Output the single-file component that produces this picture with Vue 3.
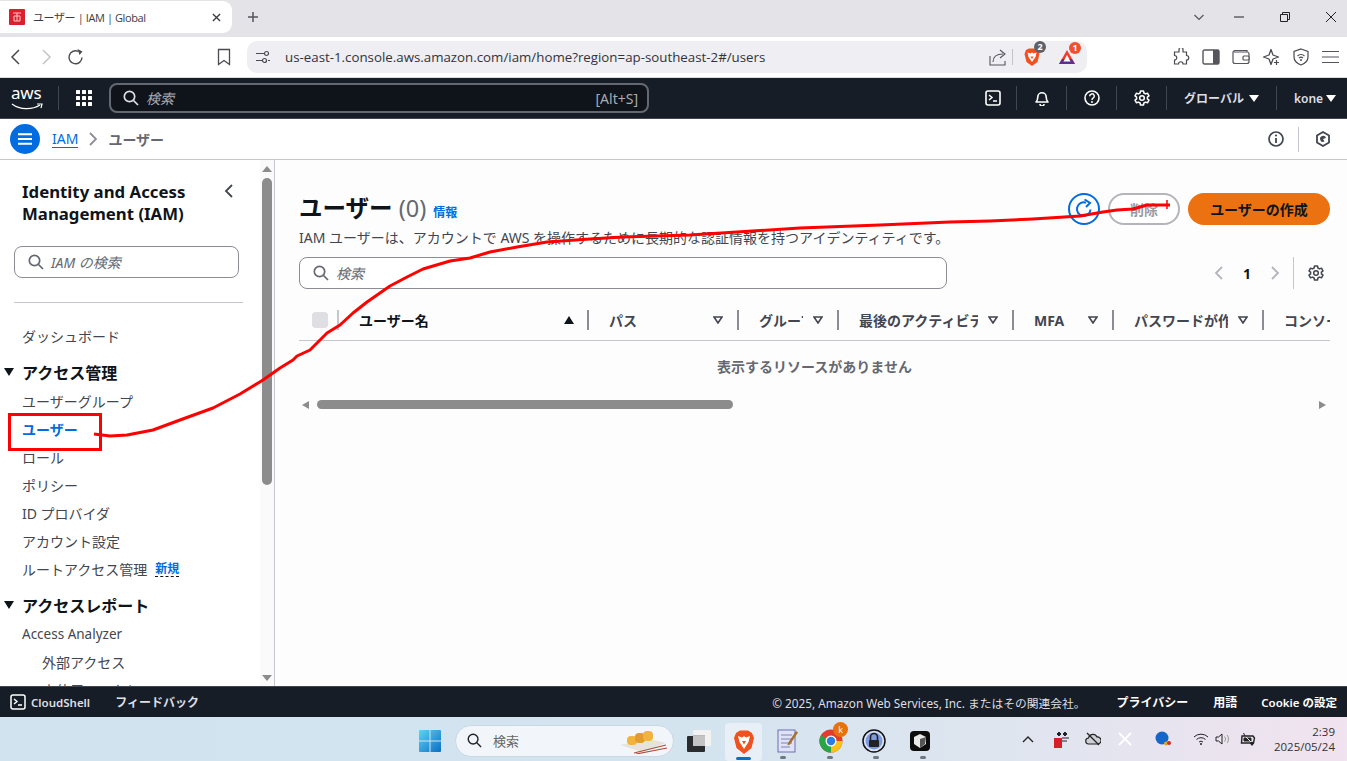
<script setup>
const sideTop = ['ユーザーグループ']
const columns = [
  { label: 'ユーザー名', width: 250, sort: true, strong: true },
  { label: 'パス', width: 150 },
  { label: 'グループ', width: 100 },
  { label: '最後のアクティビティ', width: 175 },
  { label: 'MFA', width: 100 },
  { label: 'パスワードが作成された日時', width: 150 },
  { label: 'コンソールへの最終サインイン', width: 200, last: true }
]
const redLine = '94,434 110,436 127,435 153,430 180,420 213,408 240,394 263,380 280,368 293,360 297,356 310,350 327,333 340,325 353,313 367,302 390,286 407,277 423,269 450,261 470,258 490,252 517,247 547,242 590,239 623,237 690,235 800,228 880,225 950,222 990,221 1033,219 1080,216 1103,212 1117,210 1133,209 1147,205 1170,205'
const trayDots = [0, 1, 2, 3]
</script>

<template>
  <div class="screen">
    <!-- browser tab strip -->
    <div class="tabstrip">
      <div class="tab">
        <svg class="favicon" viewBox="0 0 16 16"><rect width="16" height="16" rx="1" fill="#d9202c"/><path d="M4 4h8M5 7h6v5H5zM8 4v8" fill="none" stroke="#f8c9c9" stroke-width="1"/></svg>
        <span class="tabtitle">ユーザー | IAM | Global</span>
        <svg class="tabclose" viewBox="0 0 10 10"><path d="M1 1l8 8M9 1l-8 8" stroke="#3c3c43" stroke-width="1.5"/></svg>
      </div>
      <svg class="newtab" viewBox="0 0 12 12"><path d="M6 1v10M1 6h10" stroke="#55555c" stroke-width="1.5"/></svg>
      <div class="winctl">
        <svg viewBox="0 0 12 12" class="wc-chev"><path d="M1.500 4l4.500 4.500L10.500 4" fill="none" stroke="#55555c" stroke-width="1.200"/></svg>
        <svg viewBox="0 0 12 12" class="wc-btn"><path d="M1 6h10" stroke="#222" stroke-width="1"/></svg>
        <svg viewBox="0 0 12 12" class="wc-btn"><path d="M1.500 3.500h7v7h-7zM3.500 3.500v-2h7v7h-2" fill="none" stroke="#222" stroke-width="1"/></svg>
        <svg viewBox="0 0 12 12" class="wc-btn"><path d="M1 1l10 10M11 1L1 11" stroke="#222" stroke-width="1"/></svg>
      </div>
    </div>

    <!-- browser toolbar -->
    <div class="toolbar">
      <div class="tb-left">
        <span class="tb-btn"><svg viewBox="0 0 16 18" width="16" height="18"><path d="M11 2L4 9l7 7" fill="none" stroke="#4a4a50" stroke-width="1.500"/></svg></span>
        <span class="tb-btn"><svg viewBox="0 0 16 18" width="16" height="18"><path d="M5 2l7 7-7 7" fill="none" stroke="#c4c4c9" stroke-width="1.500"/></svg></span>
        <span class="tb-btn"><svg viewBox="0 0 18 18" width="18" height="18"><path d="M15 9.500A6.500 6.500 0 1 1 11.500 3.500" fill="none" stroke="#4a4a50" stroke-width="1.400"/><path d="M10.500 1l5 2.500-3 3.500z" fill="#4a4a50"/></svg></span>
        <span class="tb-btn tb-mark"><svg viewBox="0 0 14 18" width="14" height="18"><path d="M1.500 1.500h11v15L7 12.500 1.500 16.500z" fill="none" stroke="#4a4a50" stroke-width="1.300"/></svg></span>
      </div>
      <div class="address">
        <svg class="tune" viewBox="0 0 14 14" width="14" height="14"><path d="M0 3.500h8M12 10.500h2M0 10.500h6" stroke="#4a4a50" stroke-width="1.200"/><circle cx="10.500" cy="3.500" r="2" fill="none" stroke="#4a4a50" stroke-width="1.200"/><circle cx="8.500" cy="10.500" r="2" fill="none" stroke="#4a4a50" stroke-width="1.200"/></svg>
        <span class="url">us-east-1.console.aws.amazon.com/iam/home?region=ap-southeast-2#/users</span>
        <div class="addr-right">
          <svg viewBox="0 0 18 18" width="18" height="18"><path d="M1 8v9h15v-4" fill="none" stroke="#55555c" stroke-width="1.100"/><path d="M4 14c0-6 4-8 10-8M11 2l5 4-5 4" fill="none" stroke="#55555c" stroke-width="1.100"/></svg>
          <i class="addr-sep"></i>
          <span class="shield-wrap">
            <svg viewBox="0 0 16 18" width="16" height="18"><path d="M2 2l3-1.500h6L14 2l1.500 4-2 8L8 18l-5.500-4-2-8z" fill="#f1501f"/><path d="M3.500 4.500l3 1 1.500-1 1.500 1 3-1-1 4.500L8 14 4.500 9z" fill="#fff"/><path d="M6.500 8.500h3L8 11z" fill="#f1501f"/></svg>
            <b class="badge b-gray">2</b>
          </span>
          <span class="shield-wrap bat">
            <svg viewBox="0 0 18 16" width="18" height="16"><path d="M9 1l8 14H1z" fill="#f23b2f"/><path d="M1 15h16l-3-5H4z" fill="#662d91"/><path d="M9 6l3.500 6.500h-7z" fill="#fff"/></svg>
            <b class="badge b-red">1</b>
          </span>
        </div>
      </div>
      <div class="tb-right">
        <span class="tb-btn"><svg viewBox="0 0 18 18" width="18" height="18"><path d="M7 1.500a2 2 0 0 1 4 0V4h3.500v3.500a2.200 2.200 0 0 1 0 4.500v4H11a2.200 2.200 0 0 0-4.500 0H2.500v-4a2.200 2.200 0 0 0 0-4.500V4H7z" fill="none" stroke="#4a4a50" stroke-width="1.200"/></svg></span>
        <span class="tb-btn"><svg viewBox="0 0 18 16" width="18" height="16"><rect x="1" y="1" width="16" height="14" rx="1.500" fill="none" stroke="#55555c" stroke-width="1.400"/><rect x="11" y="1" width="6" height="14" fill="#55555c"/></svg></span>
        <span class="tb-btn"><svg viewBox="0 0 18 16" width="18" height="16"><path d="M15 3V1.500H3A2 2 0 0 0 1 3.500v9A2 2 0 0 0 3 14.500h12A2 2 0 0 0 17 12.500V5a2 2 0 0 0-2-2H2" fill="none" stroke="#55555c" stroke-width="1.200"/><rect x="11" y="7" width="6" height="4" rx="1" fill="#fff" stroke="#55555c" stroke-width="1.200"/></svg></span>
        <span class="tb-btn"><svg viewBox="0 0 18 18" width="18" height="18"><path d="M9 1.500l2 5.500 5.500 2-5.500 2-2 5.500-2-5.500-5.500-2 5.500-2z" fill="none" stroke="#4a4a50" stroke-width="1.300" stroke-linejoin="round"/><path d="M14.500 12v5M12 14.500h5" stroke="#4a4a50" stroke-width="1.200"/></svg></span>
        <span class="tb-btn"><svg viewBox="0 0 16 18" width="16" height="18"><path d="M8 1l7 2.500V9c0 4-3 6.500-7 8-4-1.500-7-4-7-8V3.500z" fill="none" stroke="#4a4a50" stroke-width="1.200"/><path d="M4.500 8a5 5 0 0 1 7 0M6 10a3 3 0 0 1 4 0" fill="none" stroke="#4a4a50" stroke-width="1.100"/><circle cx="8" cy="12" r="1" fill="#4a4a50"/></svg></span>
        <span class="tb-btn"><svg viewBox="0 0 18 14" width="18" height="14"><path d="M0 1.500h17M0 7h17M0 12.500h17" stroke="#55555c" stroke-width="1.200"/></svg></span>
      </div>
    </div>

    <!-- AWS console nav -->
    <header class="awsnav">
      <div class="logo">
        <span class="logo-word">aws</span>
        <svg class="logo-smile" viewBox="0 0 32 8" width="32" height="8"><path d="M1 1c8 6 20 6 28 1" fill="none" stroke="#fff" stroke-width="1.300"/><path d="M26 1h5l-1 4" fill="none" stroke="#fff" stroke-width="1.200"/></svg>
      </div>
      <div class="apps">
        <svg viewBox="0 0 16 16" width="16" height="16" fill="#fff">
          <template v-for="y in [0,6,12]" :key="y"><rect v-for="x in [0,6,12]" :key="x" :x="x" :y="y" width="4" height="4" rx=".5"/></template>
        </svg>
      </div>
      <div class="navsearch">
        <svg viewBox="0 0 16 16" width="16" height="16"><circle cx="6.500" cy="6.500" r="5.200" fill="none" stroke="#dedee3" stroke-width="1.700"/><path d="M10.500 10.500l4.500 4.500" stroke="#dedee3" stroke-width="1.700"/></svg>
        <em>検索</em>
        <span class="kbd">[Alt+S]</span>
      </div>
      <div class="navright">
        <span class="nv nv-term"><svg viewBox="0 0 16 16" width="16" height="16"><rect x="1" y="1" width="14" height="14" rx="2" fill="none" stroke="#fff" stroke-width="1.600"/><path d="M4 5l3 2.500L4 10M8 11h4" fill="none" stroke="#fff" stroke-width="1.500"/></svg></span>
        <span class="nv"><svg viewBox="0 0 16 16" width="16" height="16"><path d="M2 12c1.500-1.500 1.800-3 1.800-5a4.200 4.200 0 0 1 8.400 0c0 2 .3 3.500 1.800 5z" fill="none" stroke="#fff" stroke-width="1.600" stroke-linejoin="round"/><path d="M6 14a2 2 0 0 0 4 0" fill="none" stroke="#fff" stroke-width="1.500"/></svg></span>
        <span class="nv"><svg viewBox="0 0 16 16" width="16" height="16"><circle cx="8" cy="8" r="7" fill="none" stroke="#fff" stroke-width="1.600"/><path d="M5.700 6.200a2.300 2.300 0 1 1 3.400 2C8.300 8.700 8 9 8 10" fill="none" stroke="#fff" stroke-width="1.500"/><circle cx="8" cy="12" r="1" fill="#fff"/></svg></span>
        <span class="nv"><svg viewBox="0 0 16 16" width="16" height="16"><path d="M6.500 1h3l.4 2 1.600.9 2-.7 1.500 2.600-1.600 1.300v1.800l1.600 1.300-1.500 2.600-2-.7-1.600.9-.4 2h-3l-.4-2-1.600-.9-2 .7L1 10.200l1.600-1.300V7.100L1 5.800l1.500-2.600 2 .7L6.100 3z" fill="none" stroke="#fff" stroke-width="1.500" stroke-linejoin="round"/><circle cx="8" cy="8" r="2.300" fill="none" stroke="#fff" stroke-width="1.500"/></svg></span>
        <span class="nv nv-global">グローバル<i class="caret"></i></span>
        <span class="nv nv-user">kone<i class="caret"></i></span>
      </div>
    </header>

    <!-- breadcrumbs -->
    <div class="crumbs">
      <span class="menu-btn"><svg viewBox="0 0 16 12" width="16" height="12"><path d="M1 1.200h14M1 6h14M1 10.800h14" stroke="#fff" stroke-width="2"/></svg></span>
      <a class="crumb-link">IAM</a>
      <svg class="crumb-sep" viewBox="0 0 8 14" width="8" height="14"><path d="M1 1l6 6-6 6" fill="none" stroke="#8c8c94" stroke-width="1.800"/></svg>
      <span class="crumb-cur">ユーザー</span>
      <div class="crumbs-right">
        <svg viewBox="0 0 16 16" width="16" height="16"><circle cx="8" cy="8" r="7" fill="none" stroke="#424650" stroke-width="1.700"/><path d="M8 7v5" stroke="#424650" stroke-width="1.800"/><circle cx="8" cy="4.500" r="1.100" fill="#424650"/></svg>
        <i class="crumb-div"></i>
        <svg viewBox="0 0 16 16" width="16" height="16"><path d="M8 1l6 3.500v7L8 15l-6-3.500v-7z" fill="none" stroke="#424650" stroke-width="1.800"/><path d="M11 7A3 3 0 1 0 9.500 10.600L8 8z" fill="#424650"/></svg>
      </div>
    </div>

    <div class="body">
      <!-- side navigation -->
      <aside class="side">
        <div class="side-scroll">
          <div class="side-head">
            <h2>Identity and Access Management (IAM)</h2>
            <svg viewBox="0 0 10 14" width="10" height="14"><path d="M8 1L2 7l6 6" fill="none" stroke="#424650" stroke-width="1.800"/></svg>
          </div>
          <div class="side-search">
            <svg viewBox="0 0 16 16" width="16" height="16"><circle cx="6.500" cy="6.500" r="5.200" fill="none" stroke="#656871" stroke-width="1.700"/><path d="M10.500 10.500l4.500 4.500" stroke="#656871" stroke-width="1.700"/></svg>
            <em>IAM の検索</em>
          </div>
          <hr class="side-rule" />
          <a class="side-item">ダッシュボード</a>
          <div class="side-section"><i class="tri"></i>アクセス管理</div>
          <a class="side-item" v-for="s in sideTop" :key="s">{{ s }}</a>
          <a class="side-item active">ユーザー</a>
          <a class="side-item">ロール</a>
          <a class="side-item">ポリシー</a>
          <a class="side-item">ID プロバイダ</a>
          <a class="side-item">アカウント設定</a>
          <a class="side-item">ルートアクセス管理<span class="new">新規</span></a>
          <div class="side-section sec2"><i class="tri"></i>アクセスレポート</div>
          <a class="side-item latin">Access Analyzer</a>
          <a class="side-item sub">外部アクセス</a>
          <a class="side-item sub">未使用のアクセス</a>
        </div>
        <div class="side-bar">
          <i class="arr-up"></i>
          <i class="side-thumb"></i>
          <i class="arr-down"></i>
        </div>
      </aside>

      <!-- main content -->
      <main class="main">
        <div class="page-head">
          <div class="title-wrap">
            <h1>ユーザー <span class="count">(0)</span></h1>
            <a class="info">情報</a>
          </div>
          <div class="actions">
            <span class="refresh"><svg viewBox="0 0 20 20" width="20" height="20"><path d="M16.500 10.500A6.800 6.800 0 1 1 12 3.700" fill="none" stroke="#006ce0" stroke-width="2"/><path d="M10.500 0.500l5.500 3.500-4 4" fill="none" stroke="#006ce0" stroke-width="2"/></svg></span>
            <span class="btn-del">削除</span>
            <span class="btn-create">ユーザーの作成</span>
          </div>
        </div>
        <p class="desc">IAM ユーザーは、アカウントで AWS を操作するために長期的な認証情報を持つアイデンティティです。</p>
        <div class="filter-row">
          <div class="filter">
            <svg viewBox="0 0 16 16" width="16" height="16"><circle cx="6.500" cy="6.500" r="5.200" fill="none" stroke="#656871" stroke-width="1.700"/><path d="M10.500 10.500l4.500 4.500" stroke="#656871" stroke-width="1.700"/></svg>
            <em>検索</em>
          </div>
          <div class="pager">
            <svg viewBox="0 0 10 14" width="10" height="14"><path d="M8 1L2 7l6 6" fill="none" stroke="#b4b4bb" stroke-width="1.800"/></svg>
            <b>1</b>
            <svg viewBox="0 0 10 14" width="10" height="14"><path d="M2 1l6 6-6 6" fill="none" stroke="#b4b4bb" stroke-width="1.800"/></svg>
            <i class="pager-div"></i>
            <svg viewBox="0 0 16 16" width="16" height="16"><path d="M6.500 1h3l.4 2 1.600.9 2-.7 1.500 2.600-1.600 1.300v1.800l1.600 1.300-1.500 2.600-2-.7-1.600.9-.4 2h-3l-.4-2-1.600-.9-2 .7L1 10.200l1.600-1.300V7.100L1 5.800l1.500-2.600 2 .7L6.100 3z" fill="none" stroke="#424650" stroke-width="1.500" stroke-linejoin="round"/><circle cx="8" cy="8" r="2.300" fill="none" stroke="#424650" stroke-width="1.500"/></svg>
          </div>
        </div>
        <div class="table">
          <div class="thead">
            <div class="th-check"><i class="check"></i></div>
            <div v-for="c in columns" :key="c.label" class="th" :class="{ strong: c.strong, last: c.last }" :style="{ flexBasis: c.width + 'px' }">
              <span class="th-text">{{ c.label }}</span>
              <i v-if="c.sort" class="sort-up"></i>
              <svg v-else-if="!c.last" class="sort-open" viewBox="0 0 10 8" width="10" height="8"><path d="M1 1h8L5 7z" fill="none" stroke="#424650" stroke-width="1.600"/></svg>
            </div>
          </div>
          <div class="empty">表示するリソースがありません</div>
          <div class="hbar">
            <i class="arr-left"></i>
            <i class="h-thumb"></i>
            <i class="arr-right"></i>
          </div>
        </div>
      </main>
    </div>

    <!-- console footer -->
    <footer class="foot">
      <svg viewBox="0 0 16 16" width="16" height="16"><rect x="1" y="1" width="14" height="14" rx="2" fill="none" stroke="#fff" stroke-width="1.500"/><path d="M4 5l3 2.500L4 10M8 11h4" fill="none" stroke="#fff" stroke-width="1.400"/></svg>
      <span class="f-cs">CloudShell</span>
      <span class="f-fb">フィードバック</span>
      <span class="f-copy">© 2025, Amazon Web Services, Inc. またはその関連会社。</span>
      <span class="f-link f-priv">プライバシー</span>
      <span class="f-link f-term">用語</span>
      <span class="f-link f-cook">Cookie の設定</span>
    </footer>

    <!-- windows taskbar -->
    <div class="taskbar">
      <svg class="win" viewBox="0 0 22 22" width="22" height="22">
        <defs><linearGradient id="wg" x1="0" y1="0" x2="1" y2="1"><stop offset="0" stop-color="#5fd3f8"/><stop offset="1" stop-color="#0a6fc2"/></linearGradient></defs>
        <path d="M0 1a1 1 0 0 1 1-1h9.500v10.500H0zM11.500 0H21a1 1 0 0 1 1 1v9.500H11.500zM0 11.500h10.500V22H1a1 1 0 0 1-1-1zM11.500 11.500H22V21a1 1 0 0 1-1 1h-9.500z" fill="url(#wg)"/>
      </svg>
      <div class="ts">
        <svg viewBox="0 0 16 16" width="15" height="15"><circle cx="6.500" cy="6.500" r="5.200" fill="none" stroke="#222" stroke-width="1.500"/><path d="M10.500 10.500l4.500 4.500" stroke="#222" stroke-width="1.500"/></svg>
        <span>検索</span>
        <svg class="bento" viewBox="0 0 50 26" width="50" height="26"><path d="M0 17l30-6 16 4-24 9z" fill="#e6e3dc"/><rect x="7" y="8" width="10" height="9" rx="4" fill="#f2b33d"/><rect x="15" y="5" width="10" height="10" rx="4" fill="#e39a2f"/><rect x="23" y="3" width="10" height="10" rx="4" fill="#f2b33d"/><path d="M14 25l32-8M16 26l31-6" stroke="#b04a38" stroke-width="1.200"/></svg>
      </div>
      <svg class="tk-tasks" viewBox="0 0 24 22" width="24" height="22"><rect x="6" y="0" width="18" height="16" rx="1" fill="#f2f2f2"/><rect x="6" y="5" width="12" height="11" fill="#b9b9b9"/><rect x="0" y="6" width="18" height="16" rx="1" fill="#222" opacity=".95"/><rect x="6" y="6" width="12" height="10" fill="#c4c4c4"/></svg>
      <div class="tk-active">
        <svg viewBox="0 0 20 24" width="20" height="24"><path d="M2 3l4-2.500h8L18 3l2 5-2.500 10L10 24 2.500 18 0 8z" fill="#f1501f"/><path d="M4 6l4 1.500 2-1.500 2 1.500L16 6l-1.500 6L10 19l-4.500-7z" fill="#fff"/><path d="M8 11h4l-2 3.500z" fill="#f1501f"/></svg>
        <i class="run-blue"></i>
      </div>
      <div class="tk-item">
        <svg viewBox="0 0 22 24" width="22" height="24"><rect x="1" y="1" width="17" height="22" fill="#dfe3f5" stroke="#6a6fb0"/><path d="M4 6h11M4 10h11M4 14h11M4 18h9" stroke="#7d82bd"/><path d="M19 2l2 1.500-8 12-2.500 1 .5-2.500z" fill="#a8702e"/></svg>
      </div>
      <div class="tk-item tk-chrome">
        <svg viewBox="0 0 24 24" width="24" height="24"><circle cx="12" cy="12" r="11.500" fill="#e33b2e"/><path d="M12 12L2 6.200A11.500 11.500 0 0 0 12 23.500z" fill="#27a547"/><path d="M12 12h11.500A11.500 11.500 0 0 1 12 23.500z" fill="#fbc116"/><circle cx="12" cy="12" r="5.500" fill="#fff"/><circle cx="12" cy="12" r="4.200" fill="#2a7de1"/></svg>
        <b class="k-badge">k</b>
      </div>
      <div class="tk-item tk-lock">
        <svg viewBox="0 0 24 24" width="24" height="24"><circle cx="12" cy="12" r="11" fill="#dfe5f8" stroke="#111" stroke-width="1.500"/><circle cx="12" cy="12" r="8.500" fill="#7e9be0"/><path d="M8.500 11V8a3.500 3.500 0 0 1 7 0v3" fill="none" stroke="#222" stroke-width="1.600"/><rect x="7" y="11" width="10" height="7" rx="1" fill="#222"/></svg>
      </div>
      <div class="tk-item tk-box">
        <svg viewBox="0 0 20 20" width="20" height="20"><rect width="20" height="20" rx="4" fill="#0c0c0c"/><path d="M10 3l6 3v7l-6 4-6-4V6z" fill="#e8e8e8"/><path d="M10 8l6-2-1 7-5 4z" fill="#555"/></svg>
      </div>
      <div class="tray">
        <svg class="t-caret" viewBox="0 0 12 8" width="12" height="8"><path d="M1 7l5-5 5 5" fill="none" stroke="#222" stroke-width="1.300"/></svg>
        <svg class="t-drop" viewBox="0 0 16 18" width="16" height="18"><path d="M3 4l2-2 2 2-2 2zM9 4l2-2 2 2-2 2zM8 8h7M8 11h5" stroke="#222" fill="#222"/><rect x="0" y="8" width="8" height="10" fill="#d51f26"/></svg>
        <svg class="t-cloud" viewBox="0 0 16 14" width="16" height="14"><path d="M4 12a3 3 0 0 1-.5-6 4.500 4.500 0 0 1 8.500-1 3.500 3.500 0 0 1 1 7z" fill="#ccd0d6" stroke="#222" stroke-width="1.200"/><path d="M2 1l12 12" stroke="#222" stroke-width="1.300"/></svg>
        <svg class="t-x" viewBox="0 0 14 14" width="14" height="14"><path d="M1 1l12 12M13 1L1 13" stroke="#fff" stroke-width="1.800"/></svg>
        <svg class="t-blue" viewBox="0 0 16 16" width="16" height="16"><circle cx="7" cy="7" r="6.500" fill="#1467c8"/><circle cx="11" cy="12.500" r="2" fill="#e8a31b"/><circle cx="14" cy="12" r="2" fill="#d8291f"/></svg>
        <svg class="t-wifi" viewBox="0 0 16 12" width="16" height="12"><path d="M1 4a10 10 0 0 1 14 0M3.500 6.500a6.500 6.500 0 0 1 9 0M6 9a3 3 0 0 1 4 0" fill="none" stroke="#222" stroke-width="1"/><circle cx="8" cy="11" r="1" fill="#222"/></svg>
        <svg class="t-spk" viewBox="0 0 16 14" width="16" height="14"><path d="M1 5v4h2.500L7 12V2L3.500 5z" fill="none" stroke="#222"/><path d="M9.500 4.500a3.500 3.500 0 0 1 0 5M12 3a6 6 0 0 1 0 8" fill="none" stroke="#9a9a9a"/></svg>
        <svg class="t-bat" viewBox="0 0 18 16" width="18" height="16"><path d="M2 5h11l1.500 2-1 5H1.500z" fill="none" stroke="#222" stroke-width="1.400"/><path d="M3.500 2l1.500 3M4 7h7v3H4z" fill="#222" stroke="#222"/><path d="M12 15l-2-2.500a1.400 1.400 0 0 1 2-1.500 1.400 1.400 0 0 1 2 1.500z" fill="#222"/><path d="M6 6l5 5" stroke="#e6e6ef"/></svg>
        <div class="clock"><span>2:39</span><span>2025/05/24</span></div>
      </div>
      <div class="run-dots">
        <i v-for="d in trayDots" :key="d"></i>
      </div>
    </div>

    <!-- hand-drawn annotation over the screenshot -->
    <svg class="annot" viewBox="0 0 1347 761" width="1347" height="761">
      <rect x="9.500" y="414.500" width="91" height="35" fill="none" stroke="#ff0000" stroke-width="3"/>
      <polyline :points="redLine" fill="none" stroke="#ff0000" stroke-width="3" stroke-linejoin="round"/>
      <path d="M1167 200v9" stroke="#ff0000" stroke-width="1.500"/>
    </svg>
  </div>
</template>

<style>
html, body { margin: 0; padding: 0; overflow: hidden; }
</style>

<style scoped>
.screen {
  position: relative;
  width: 1347px;
  height: 761px;
  overflow: hidden;
  display: flex;
  flex-direction: column;
  font-family: "Noto Sans", "Noto Sans CJK JP", sans-serif;
  color: #424650;
  background: #fff;
}
svg { display: block; flex: none; }
h1, h2, p { margin: 0; }
em { font-style: italic; }

/* tab strip */
.tabstrip { height: 37px; flex: none; background: #e3e3e8; display: flex; align-items: flex-start; font-family: "Open Sans", "Noto Sans CJK JP", sans-serif; }
.tab { width: 232px; height: 32px; margin-top: 1px; background: #fff; border-radius: 0 9px 9px 0; display: flex; align-items: center; padding-left: 9px; box-sizing: border-box; }
.favicon { width: 16px; height: 16px; }
.tabtitle { margin-left: 8px; font-size: 11px; letter-spacing: -.4px; color: #3c3c43; flex: 1; }
.tabclose { width: 9px; height: 9px; margin-right: 11px; }
.newtab { width: 12px; height: 12px; margin: 11px 0 0 15px; }
.winctl { margin-left: auto; display: flex; align-items: center; height: 34px; }
.wc-chev { width: 12px; height: 12px; margin-right: 28px; }
.wc-btn { width: 12px; height: 12px; margin-right: 34px; }
.wc-btn:last-child { margin-right: 10px; }

/* toolbar */
.toolbar { height: 41px; flex: none; box-sizing: border-box; border-bottom: 1px solid #dcdce0; background: #fff; display: flex; align-items: flex-start; font-family: "Open Sans", sans-serif; }
.tb-left { width: 247px; display: flex; padding: 4px 0 0 1px; box-sizing: border-box; }
.tb-btn { width: 30px; height: 32px; display: flex; align-items: center; justify-content: center; flex: none; }
.tb-mark { margin-left: auto; margin-right: 8px; }
.address { width: 840px; height: 32px; margin-top: 4px; background: #eeeef3; border-radius: 10px; display: flex; align-items: center; padding-left: 9px; box-sizing: border-box; }
.url { margin-left: 15px; font-size: 13.300px; color: #33333a; white-space: nowrap; }
.addr-right { margin-left: auto; display: flex; align-items: center; }
.addr-sep { width: 1px; height: 16px; background: #c4c4c9; margin: 0 11px 0 5px; }
.shield-wrap { position: relative; width: 28px; }
.bat { margin: 0 1px 0 6px; }
.badge { position: absolute; top: -7px; left: 10px; width: 12px; height: 12px; border-radius: 50%; color: #fff; font-size: 9px; line-height: 12px; text-align: center; }
.b-gray { background: #5f6068; }
.b-red { background: #f0502f; left: 11px; }
.tb-right { margin-left: auto; padding: 4px 1px 0 0; display: flex; }

/* aws nav */
.awsnav { height: 41px; flex: none; box-sizing: border-box; background: #161d26; border-bottom: 1px solid #424650; display: flex; align-items: center; color: #fff; }
.logo { width: 59px; height: 24px; box-sizing: border-box; border-right: 1px solid #424650; padding-left: 11px; position: relative; }
.logo-word { display: block; font: 17px/17px "Noto Sans", sans-serif; margin-top: -2px; letter-spacing: -.2px; }
.logo-smile { position: absolute; left: 11px; top: 17px; }
.apps { width: 50px; display: flex; justify-content: center; }
.navsearch { width: 540px; height: 30px; box-sizing: border-box; border: 2px solid #656871; border-radius: 8px; background: #0f141a; display: flex; align-items: center; padding: 0 9px 0 12px; font-size: 14px; color: #a9abb3; }
.navsearch em { margin-left: 7px; }
.kbd { margin-left: auto; font-size: 14px; }
.navright { margin-left: auto; display: flex; align-items: center; }
.nv { width: 50px; height: 24px; box-sizing: border-box; border-right: 1px solid #424650; display: flex; align-items: center; justify-content: center; font-size: 12px; font-weight: 600; color: #dedee3; white-space: nowrap; }
.nv-term { padding-left: 2px; }
.nv-global { width: 110px; }
.nv-global .caret { margin-left: 5px; }
.nv-user { width: 70px; border-right: 0; font-size: 12px; padding-left: 6px; }
.caret { width: 0; height: 0; border-left: 5px solid transparent; border-right: 5px solid transparent; border-top: 7px solid #fff; }
.nv-user .caret { margin-left: 3px; }

/* breadcrumbs */
.crumbs { height: 41px; flex: none; box-sizing: border-box; background: #fff; border-bottom: 1px solid #c6c6cd; display: flex; align-items: center; padding-left: 10px; font-size: 14px; }
.menu-btn { width: 30px; height: 30px; border-radius: 50%; background: #006ce0; display: flex; align-items: center; justify-content: center; }
.crumb-link { margin-left: 12px; color: #006ce0; border-bottom: 1px solid #006ce0; line-height: 17px; }
.crumb-sep { margin: 0 11px 0 11px; }
.crumb-cur { font-weight: 700; color: #656871; font-size: 14px; }
.crumbs-right { margin-left: auto; padding-right: 16px; display: flex; align-items: center; }
.crumb-div { width: 1px; height: 25px; background: #c6c6cd; margin: 0 16px 0 14px; }

/* layout */
.body { flex: 1; min-height: 0; display: flex; }
.side { width: 275px; flex: none; box-sizing: border-box; border-right: 1px solid #c6c6cd; display: flex; background: #fff; }
.side-scroll { width: 260px; flex: none; overflow: hidden; box-sizing: border-box; padding: 21px 0 0 14px; font-size: 14px; }
.side-head { display: flex; justify-content: space-between; align-items: flex-start; padding: 0 1px 0 8px; width: 221px; box-sizing: border-box; }
.side-head h2 { font-size: 16.800px; line-height: 22px; font-weight: 700; color: #0f141a; width: 180px; }
.side-head svg { margin-top: 3px; }
.side-search { width: 225px; height: 32px; margin-top: 21px; box-sizing: border-box; border: 1px solid #8c8c94; border-radius: 8px; display: flex; align-items: center; padding-left: 13px; color: #656871; }
.side-search em { margin-left: 7px; font-size: 14px; }
.side-rule { width: 229px; margin: 24px 0 19px; border: 0; border-top: 1px solid #c6c6cd; }
.side-item { display: flex; align-items: center; height: 28px; padding-left: 8px; color: #424650; white-space: nowrap; }
.side-item.active { color: #006ce0; font-weight: 700; }
.side-item.sub { padding-left: 28px; }
.side-item.latin { font-size: 13.500px; }
.side-section { display: flex; align-items: center; height: 28px; margin: 8px 0 1px -10px; font-size: 16px; font-weight: 700; color: #0f141a; }
.sec2 { margin-top: 8px; }
.tri { width: 0; height: 0; border-left: 5px solid transparent; border-right: 5px solid transparent; border-top: 8px solid #0f141a; margin-right: 8px; }
.new { margin-left: 8px; font-size: 12px; font-weight: 700; color: #006ce0; border-bottom: 1px dashed #0f141a; line-height: 15px; }
.side-bar { width: 14px; flex: none; background: #fafafa; display: flex; flex-direction: column; align-items: center; }
.arr-up { margin-top: 6px; width: 0; height: 0; border-left: 5px solid transparent; border-right: 5px solid transparent; border-bottom: 6px solid #8c8c8c; }
.side-thumb { width: 10px; height: 307px; margin: 6px 0 0; background: #8c8c8c; border-radius: 5px; }
.arr-down { margin-top: auto; margin-bottom: 5px; width: 0; height: 0; border-left: 5px solid transparent; border-right: 5px solid transparent; border-top: 6px solid #8c8c8c; }

/* main */
.main { flex: 1; min-width: 0; background: #fdfdfd; padding: 33px 17px 0 24px; }
.page-head { display: flex; justify-content: space-between; align-items: center; height: 32px; }
.title-wrap { display: flex; align-items: center; }
.title-wrap h1 { font-size: 23.500px; line-height: 28px; font-weight: 700; color: #0f141a; margin-bottom: 2px; }
.count { font-weight: 400; color: #656871; }
.info { margin: 6px 0 0 7px; font-size: 12px; font-weight: 700; color: #006ce0; }
.actions { display: flex; align-items: center; }
.refresh { width: 28px; height: 28px; border: 2px solid #006ce0; border-radius: 50%; display: flex; align-items: center; justify-content: center; margin-right: 8px; }
.btn-del { width: 72px; height: 32px; box-sizing: border-box; border: 2px solid #b4b4bb; border-radius: 16px; display: flex; align-items: center; justify-content: center; font-size: 14px; font-weight: 700; color: #9a9aa2; margin-right: 8px; background: #fff; }
.btn-create { width: 142px; height: 32px; border-radius: 16px; background: #ec7211; display: flex; align-items: center; justify-content: center; font-size: 14px; font-weight: 700; color: #0f141a; }
.desc { margin-top: 3px; font-size: 14px; line-height: 20px; color: #424650; white-space: nowrap; }
.filter-row { margin-top: 9px; height: 32px; display: flex; align-items: center; }
.filter { width: 648px; height: 32px; box-sizing: border-box; border: 1px solid #8c8c94; border-radius: 8px; display: flex; align-items: center; padding-left: 13px; background: #fff; color: #656871; font-size: 14px; }
.filter em { margin-left: 7px; }
.pager { margin-left: auto; display: flex; align-items: center; font-size: 14px; color: #0f141a; }
.pager b { margin: 0 19px; }
.pager-div { width: 1px; height: 32px; background: #c6c6cd; margin: 0 14px 0 13px; }
.pager svg:last-child { margin-right: 6px; }

/* table */
.table { overflow: hidden; }
.thead { margin-top: 11px; height: 41px; box-sizing: border-box; border-bottom: 1px solid #c6c6cd; display: flex; align-items: center; }
.th-check { width: 40px; flex: none; height: 20px; box-sizing: border-box; border-right: 2px solid #c6c6cd; padding-left: 13px; display: flex; align-items: center; }
.check { width: 16px; height: 16px; border-radius: 4px; background: #dedee3; }
.th { flex-grow: 0; flex-shrink: 0; min-width: 0; height: 20px; box-sizing: border-box; border-right: 2px solid #8c8c94; padding-left: 20px; display: flex; align-items: center; font-size: 14px; font-weight: 700; color: #424650; }
.th.strong { color: #0f141a; }
.th.last { border-right: 0; }
.th-text { flex: 1; min-width: 0; overflow: hidden; white-space: nowrap; }
.sort-up { width: 0; height: 0; border-left: 5.500px solid transparent; border-right: 5.500px solid transparent; border-bottom: 8px solid #0f141a; margin: 0 13px 0 10px; flex: none; }
.sort-open { margin: 0 14px 0 10px; }
.empty { height: 52px; display: flex; align-items: center; justify-content: center; font-size: 14px; font-weight: 700; color: #656871; padding-bottom: 3px; box-sizing: border-box; }
.hbar { margin-top: 7px; height: 9px; display: flex; align-items: center; padding: 0 3px; }
.arr-left { width: 0; height: 0; border-top: 4.500px solid transparent; border-bottom: 4.500px solid transparent; border-right: 7px solid #8c8c8c; }
.h-thumb { width: 416px; height: 9px; border-radius: 5px; background: #8c8c8c; margin-left: 8px; }
.arr-right { margin-left: auto; margin-right: 1px; width: 0; height: 0; border-top: 4.500px solid transparent; border-bottom: 4.500px solid transparent; border-left: 7px solid #8c8c8c; }

/* footer */
.foot { height: 31px; flex: none; box-sizing: border-box; background: #161d26; border-top: 1px solid #424650; display: flex; align-items: center; padding-left: 10px; color: #dedee3; font-size: 12px; white-space: nowrap; }
.f-cs { margin-left: 5px; font-weight: 600; font-size: 11.500px; }
.f-fb { margin-left: 25px; font-weight: 600; }
.f-copy { margin-left: auto; color: #dedee3; font-size: 11.750px; }
.f-link { font-weight: 600; color: #fff; }
.f-priv { margin-left: 31px; }
.f-term { margin-left: 25px; }
.f-cook { margin-left: 24px; margin-right: 10px; font-size: 11.500px; }

/* taskbar */
.taskbar { height: 44px; flex: none; position: relative; background: linear-gradient(90deg, #d0e3ef 0%, #d3e4ef 50%, #dfe5ef 75%, #f1e3ef 100%); display: flex; align-items: center; padding-left: 419px; font-family: "Open Sans", "Noto Sans CJK JP", sans-serif; }
.win { margin-top: 3px; }
.ts { width: 219px; height: 32px; margin: 3px 0 0 14px; box-sizing: border-box; background: #f2f6fa; border: 1px solid #c9d8e3; border-radius: 16px; display: flex; align-items: center; padding-left: 11px; font-size: 13px; color: #666; }
.ts span { margin-left: 11px; }
.bento { margin-left: auto; margin-right: 3px; }
.tk-tasks { margin: 3px 0 0 13px; }
.tk-active { width: 37px; height: 38px; margin: 5px 0 0 14px; background: #e8eff6; border-radius: 4px; display: flex; align-items: center; justify-content: center; position: relative; }
.run-blue { position: absolute; left: 11px; bottom: 1px; width: 15px; height: 3px; border-radius: 2px; background: #0a6fc2; }
.tk-item { width: 24px; margin: 3px 0 0 14px; position: relative; display: flex; justify-content: center; flex: none; }
.tk-chrome { margin-left: 19px; }
.tk-lock { margin-left: 19px; }
.tk-box { margin-left: 24px; width: 20px; }
.k-badge { position: absolute; top: -7px; right: -5px; width: 15px; height: 15px; border-radius: 50%; background: #e8710a; color: #fff; font-size: 9px; line-height: 15px; text-align: center; font-weight: 400; }
.run-dots { position: absolute; left: 780px; bottom: 2px; width: 146px; display: flex; justify-content: space-between; }
.run-dots i { width: 6px; height: 3px; border-radius: 2px; background: #6f7780; }
.tray { margin-left: auto; display: flex; align-items: center; padding-right: 12px; color: #222; }
.t-caret { margin-right: 20px; }
.t-drop { margin-right: 15px; }
.t-cloud { margin-right: 17px; }
.t-x { margin-right: 23px; }
.t-blue { margin-right: 22px; }
.t-wifi { margin-right: 6px; }
.t-spk { margin-right: 9px; }
.t-bat { margin-right: 16px; }
.clock { display: flex; flex-direction: column; align-items: flex-end; font-size: 11.500px; line-height: 15px; color: #333; }

/* annotation */
.annot { position: absolute; left: 0; top: 0; pointer-events: none; }
</style>
